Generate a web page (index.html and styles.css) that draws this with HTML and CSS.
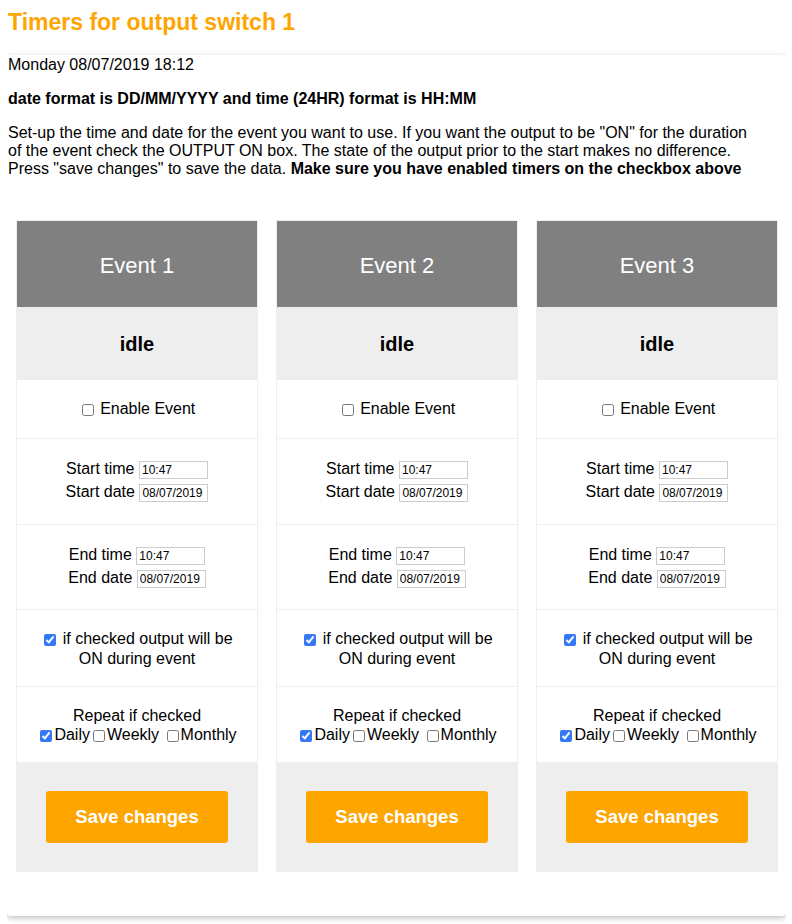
FILE: index.html
```html
<html>
<head>
<meta charset="utf-8">
<title>Timers for output switch 1</title>
<link rel="stylesheet" href="styles.css">
</head>
<body>

<h2 class="pagetitle">Timers for output switch 1</h2>

<div class="card">
	<div>Monday 08/07/2019 18:12</div>
	<p><b>date format is DD/MM/YYYY and time (24HR) format is HH:MM</b></p>
	<p class="intro">Set-up the time and date for the event you want to use. If you want the output to be "ON" for the duration of the event check the OUTPUT ON box. The state of the output prior to the start makes no difference. Press "save changes" to save the data. <b>Make sure you have enabled timers on the checkbox above</b></p>

	<div class="events">

		<!-- event 1 -->
		<form class="event" id="event1">
			<div class="evhead">Event 1</div>
			<div class="evstate">idle</div>
			<div class="evrow enable"><input type="checkbox" id="en1"> Enable Event</div>
			<div class="evrow times">
				<div class="tline">Start time <input type="text" class="tbox" value="10:47"></div>
				<div class="tline">Start date <input type="text" class="tbox" value="08/07/2019"></div>
			</div>
			<div class="evrow times endrow">
				<div class="tline">End time <input type="text" class="tbox" value="10:47"></div>
				<div class="tline">End date <input type="text" class="tbox" value="08/07/2019"></div>
			</div>
			<div class="evrow output"><input type="checkbox" checked> if checked output will be ON during event</div>
			<div class="evrow repeat">Repeat if checked<br><input type="checkbox" checked>Daily<input type="checkbox">Weekly <input type="checkbox">Monthly</div>
			<div class="evsave"><button type="button" class="savebtn">Save changes</button></div>
		</form>

		<!-- event 2 -->
		<form class="event" id="event2">
			<div class="evhead">Event 2</div>
			<div class="evstate">idle</div>
			<div class="evrow enable"><input type="checkbox" id="en2"> Enable Event</div>
			<div class="evrow times">
				<div class="tline">Start time <input type="text" class="tbox" value="10:47"></div>
				<div class="tline">Start date <input type="text" class="tbox" value="08/07/2019"></div>
			</div>
			<div class="evrow times endrow">
				<div class="tline">End time <input type="text" class="tbox" value="10:47"></div>
				<div class="tline">End date <input type="text" class="tbox" value="08/07/2019"></div>
			</div>
			<div class="evrow output"><input type="checkbox" checked> if checked output will be ON during event</div>
			<div class="evrow repeat">Repeat if checked<br><input type="checkbox" checked>Daily<input type="checkbox">Weekly <input type="checkbox">Monthly</div>
			<div class="evsave"><button type="button" class="savebtn">Save changes</button></div>
		</form>

		<!-- event 3 -->
		<form class="event" id="event3">
			<div class="evhead">Event 3</div>
			<div class="evstate">idle</div>
			<div class="evrow enable"><input type="checkbox" id="en3"> Enable Event</div>
			<div class="evrow times">
				<div class="tline">Start time <input type="text" class="tbox" value="10:47"></div>
				<div class="tline">Start date <input type="text" class="tbox" value="08/07/2019"></div>
			</div>
			<div class="evrow times endrow">
				<div class="tline">End time <input type="text" class="tbox" value="10:47"></div>
				<div class="tline">End date <input type="text" class="tbox" value="08/07/2019"></div>
			</div>
			<div class="evrow output"><input type="checkbox" checked> if checked output will be ON during event</div>
			<div class="evrow repeat">Repeat if checked<br><input type="checkbox" checked>Daily<input type="checkbox">Weekly <input type="checkbox">Monthly</div>
			<div class="evsave"><button type="button" class="savebtn">Save changes</button></div>
		</form>

	</div>
</div>

</body>
</html>
```

FILE: styles.css
```css
body {
	margin: 0 6px 0 7px;
	font-family: "Liberation Sans", Arial, Helvetica, sans-serif;
	font-size: 16px;
	line-height: 18px;
	color: #000;
	background: #fff;
}
.pagetitle {
	margin: 9px 0 20px 0;
	padding-left: 1px;
	font-size: 23px;
	line-height: 26px;
	font-weight: bold;
	color: #ffa500;
}
.card {
	padding: 1px 0 0 1px;
	border-radius: 4px;
	background: #fff;
	box-shadow: 0 2px 5px 0 rgba(0,0,0,0.16), 0 2px 10px 0 rgba(0,0,0,0.10);
}
.card p {
	margin: 16px 0;
}
.card .intro {
	margin-right: 26px;
}
.events {
	display: grid;
	grid-template-columns: repeat(3, 1fr);
	gap: 18px;
	padding: 26px 8px 44px 8px;
}
.event {
	margin: 0;
	border: 1px solid #eee;
	text-align: center;
	background: #fff;
}
.evhead {
	padding: 32px 0 29px 0;
	font-size: 22px;
	line-height: 25px;
	color: #fff;
	background-color: #808080;
}
.evstate {
	padding: 26px 0 24px 0;
	font-size: 20px;
	line-height: 23px;
	font-weight: bold;
	background-color: #eee;
}
.evrow {
	padding: 0 16px;
	border-bottom: 1px solid #eee;
}
.enable {
	padding-top: 20px;
	padding-bottom: 20px;
}
.times {
	padding-top: 18px;
	padding-bottom: 21px;
}
.endrow {
	padding-bottom: 20px;
}
.tline {
	height: 23px;
	line-height: 23px;
}
.output {
	padding-top: 19px;
	padding-bottom: 17px;
	line-height: 20px;
}
.repeat {
	padding-top: 19px;
	padding-bottom: 18px;
	line-height: 19px;
}
.evsave {
	padding: 28px 0;
	background-color: #eee;
}

input[type="checkbox"] {
	width: 12px;
	height: 12px;
	margin: 0 2px 0 3px;
	vertical-align: middle;
	accent-color: #3478f6;
}
.tbox {
	box-sizing: border-box;
	width: 69px;
	height: 18px;
	margin: 0;
	padding: 0 2px;
	border: 1px solid #ccc;
	font-family: "Liberation Sans", Arial, sans-serif;
	font-size: 12px;
	vertical-align: middle;
}

.savebtn {
	width: 182px;
	height: 52px;
	border: none;
	border-radius: 3px;
	background-color: #ffa500;
	color: #fff;
	font-family: "Liberation Sans", Arial, sans-serif;
	font-size: 18.5px;
	font-weight: bold;
	cursor: pointer;
}
.savebtn:hover {
	background-color: #ff9800;
}
```
